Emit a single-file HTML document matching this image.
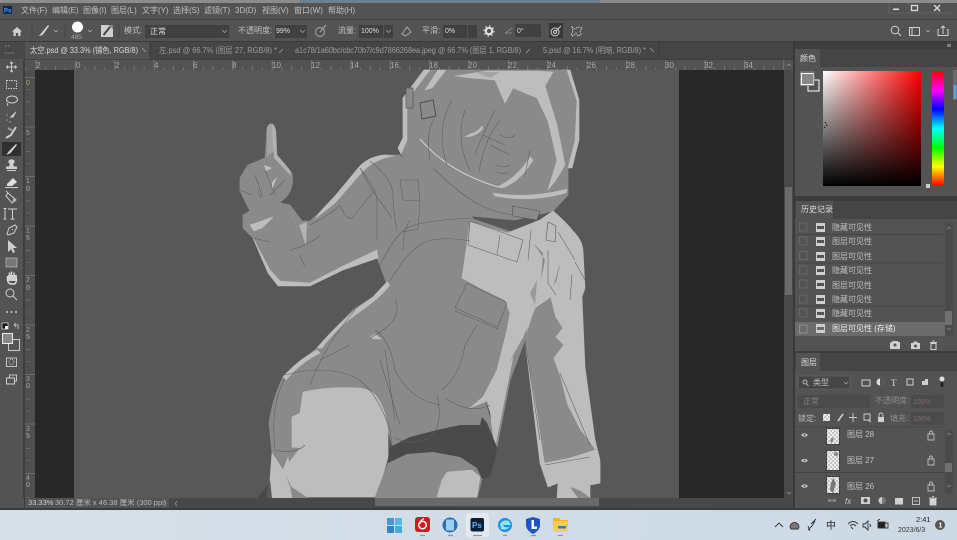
<!DOCTYPE html>
<html><head><meta charset="utf-8"><style>
html,body{margin:0;padding:0;background:#535353;width:957px;height:540px;overflow:hidden}
svg{display:block;position:absolute;left:0;top:0;filter:blur(.35px)}
text{font-family:"Liberation Sans","Noto Sans CJK SC",sans-serif;font-size:8px;fill:#c0c0c0}
.n{font-size:8px;fill:#a8a8a8}
.i{fill:none;stroke:#d0d0d0;stroke-width:1}
.f{fill:#d0d0d0}
.l{fill:none;stroke:#5e5e5e;stroke-width:.55}
.m{fill:#8a8a8a;stroke:#8a8a8a;stroke-width:.8}
.g{fill:#bdbdbd;stroke:#bdbdbd;stroke-width:.6}
</style></head><body>
<svg width="957" height="540" viewBox="0 0 957 540" xmlns="http://www.w3.org/2000/svg">
<defs>
<linearGradient id="wr" x1="0" x2="1" y1="0" y2="0"><stop offset="0" stop-color="#fff"/><stop offset="1" stop-color="#f00"/></linearGradient>
<linearGradient id="tb" x1="0" x2="0" y1="0" y2="1"><stop offset="0" stop-color="#000" stop-opacity="0"/><stop offset="1" stop-color="#000"/></linearGradient>
<linearGradient id="hue" x1="0" x2="0" y1="0" y2="1"><stop offset="0" stop-color="#f00"/><stop offset=".17" stop-color="#f0f"/><stop offset=".33" stop-color="#00f"/><stop offset=".5" stop-color="#0ff"/><stop offset=".67" stop-color="#0f0"/><stop offset=".83" stop-color="#ff0"/><stop offset="1" stop-color="#f00"/></linearGradient>
<linearGradient id="sky" x1="0" x2="1"><stop offset="0" stop-color="#d6e0e9"/><stop offset="1" stop-color="#ccd9e4"/></linearGradient>
<pattern id="chk" width="4" height="4" patternUnits="userSpaceOnUse"><rect width="4" height="4" fill="#eee"/><rect width="2" height="2" fill="#c4c4c4"/><rect x="2" y="2" width="2" height="2" fill="#c4c4c4"/></pattern>
<pattern id="rt" width="39.35" height="10" patternUnits="userSpaceOnUse" x="35.6"><path d="M.5 0V10M10.3 7.500V10M20 6V10M29.8 7.500V10" stroke="#858585" stroke-width=".7"/></pattern>
<pattern id="vt" width="10" height="49.5" patternUnits="userSpaceOnUse" y="77"><path d="M0 .5H10M7.500 12.500H10M6 25H10M7.500 37H10" stroke="#757575" stroke-width=".7"/></pattern>
</defs>

<!-- window chrome -->
<rect width="957" height="540" fill="#535353"/>
<rect width="957" height="3" fill="#8c8d88"/><rect x="300" width="300" height="3" fill="#6f7f8f"/>
<rect y="19" width="957" height="1" fill="#434343"/>
<rect y="41" width="957" height="1" fill="#3a3a3a"/>
<rect y="42" width="795" height="18" fill="#454545"/>
<rect x="25" y="42" width="125" height="18" fill="#535353"/>
<path d="M150 42V60M302 42V60M659 42V60" stroke="#3a3a3a"/>
<rect y="59.500" width="795" height="1" fill="#3a3a3a"/>

<!-- title -->
<rect x="3" y="6" width="9" height="8" fill="#0a2a52"/><text x="4" y="12.500" style="font-size:6px;font-weight:bold;fill:#3ba0f0">Ps</text>
<g>
<text x="21" y="13">文件(F)</text><text x="52" y="13">编辑(E)</text><text x="83" y="13">图像(I)</text><text x="111" y="13">图层(L)</text><text x="142" y="13">文字(Y)</text><text x="173" y="13">选择(S)</text><text x="204" y="13">滤镜(T)</text><text x="235" y="13">3D(D)</text><text x="262" y="13">视图(V)</text><text x="294" y="13">窗口(W)</text><text x="328" y="13">帮助(H)</text>
</g>
<path d="M889 3V13H950" fill="none" stroke="#666" stroke-width=".7"/>
<rect x="893" y="8.500" width="6" height="1.600" fill="#ddd"/>
<rect x="911.500" y="5.500" width="6" height="5" fill="none" stroke="#ddd" stroke-width="1.300"/>
<path d="M934 5L940 11M940 5L934 11" stroke="#ddd" stroke-width="1.300"/>

<!-- options bar -->
<path d="M12 31.500L17 27L22 31.500H20.500V36H18.200V33H15.800V36H13.500V31.500Z" class="f"/>
<path d="M32 24V38" stroke="#444"/>
<path d="M48 25L43 31L41 33.500Q39.500 35.500 38.500 36Q41.500 36 43 34.500L44.500 32.500L49 26Z" class="f"/>
<path d="M54 30L56 32L58 30" fill="none" stroke="#bbb" stroke-width=".7"/>
<path d="M65 24V38" stroke="#444"/>
<circle cx="77.500" cy="27" r="5.500" fill="#fff"/>
<text x="71" y="39" style="font-size:6.500px;fill:#aaa">485</text>
<path d="M88 30L90 32L92 30" fill="none" stroke="#bbb" stroke-width=".7"/>
<rect x="101" y="25" width="12" height="12" fill="#cfcfcf"/><path d="M103.500 35L110 27" stroke="#444" stroke-width="2"/><path d="M108 25H113V29Z" fill="#888"/>
<path d="M119 24V38" stroke="#444"/>
<text x="124" y="33">模式:</text>
<rect x="145" y="25" width="84" height="13" fill="#404040"/><text x="150" y="34" style="fill:#ddd">正常</text>
<path d="M222 30L224.500 32.500L227 30" fill="none" stroke="#aaa" stroke-width=".7"/>
<text x="238" y="33">不透明度:</text>
<rect x="275" y="25" width="32" height="13" fill="#404040"/><text x="276" y="33" style="fill:#ddd;font-size:7px">99%</text>
<path d="M300 30L302.500 32.500L305 30" fill="none" stroke="#aaa" stroke-width=".7"/>
<circle cx="320" cy="32" r="4.500" fill="none" stroke="#aaa"/><path d="M320 32L326 25" fill="none" stroke="#aaa"/>
<text x="338" y="33">流量:</text>
<rect x="359" y="25" width="24" height="13" fill="#404040"/><rect x="384" y="25" width="9" height="13" fill="#404040"/><text x="361" y="33" style="fill:#ddd;font-size:7px">100%</text>
<path d="M386 30L388.500 32.500L391 30" fill="none" stroke="#aaa" stroke-width=".7"/>
<path d="M402 34L407 27L411 32L405 36Z" fill="none" stroke="#aaa"/>
<text x="422" y="33">平滑:</text>
<rect x="443" y="25" width="24" height="13" fill="#404040"/><rect x="468" y="25" width="9" height="13" fill="#404040"/><text x="445" y="33" style="fill:#ddd;font-size:7px">0%</text>
<circle cx="489" cy="31" r="3.200" fill="none" stroke="#e0e0e0" stroke-width="2.200"/><circle cx="489" cy="31" r="5" fill="none" stroke="#e0e0e0" stroke-width="1.300" stroke-dasharray="1.500 2.400"/>
<path d="M505 33L512 28M505 33H512" fill="none" stroke="#999" stroke-width=".7"/>
<rect x="515" y="24" width="26" height="13" fill="#404040"/><text x="517" y="33" style="fill:#ddd;font-size:7px">0°</text>
<rect x="549" y="23" width="14" height="15" fill="#383838"/>
<circle cx="555" cy="32" r="4" class="i"/><circle cx="555" cy="32" r="1.500" class="i"/><path d="M556 31L561 26" class="i"/>
<path d="M572 27L575 29L578 27L582 28L580 31L581 35L578 36L576 33L573 36L571 35L573 31Z" fill="none" stroke="#ccc" stroke-width="1" stroke-dasharray="1.500 1"/>
<circle cx="895" cy="30" r="3.800" class="i"/><path d="M898 33L901 36" class="i"/>
<rect x="909.500" y="27.500" width="10" height="8" class="i"/><path d="M912 28V35" class="i"/>
<path d="M926 30L928 32L930 30" fill="none" stroke="#bbb" stroke-width=".7"/>
<path d="M939 29.500H938V35.500H948V29.500H947M943 34V26M941 28L943 26L945 28" class="i"/>

<!-- tabs -->
<text x="30" y="53" textLength="108" lengthAdjust="spacingAndGlyphs" style="fill:#d8d8d8">太空.psd @ 33.3% (铺色, RGB/8)</text><path d="M142 48L146 52" stroke="#aaa" stroke-width=".7"/>
<text x="159" y="53" textLength="118" lengthAdjust="spacingAndGlyphs" style="fill:#9c9c9c">左.psd @ 66.7% (图层 27, RGB/8) *</text><path d="M279 53L283 49" stroke="#aaa" stroke-width=".7"/>
<text x="295" y="53" textLength="226" lengthAdjust="spacingAndGlyphs" style="fill:#9c9c9c">a1c78/1a60bc/cbc70b7/c9d7866268ea.jpeg @ 66.7% (图层 1, RGB/8)</text><path d="M526 53L530 49" stroke="#aaa" stroke-width=".7"/>
<text x="543" y="53" textLength="103" lengthAdjust="spacingAndGlyphs" style="fill:#9c9c9c">5.psd @ 16.7% (明暗, RGB/8) *</text><path d="M650 48L654 52" stroke="#aaa" stroke-width=".7"/>

<!-- rulers -->
<rect x="24" y="60" width="771" height="10" fill="#535353"/>
<rect x="24" y="70" width="11" height="430" fill="#4f4f4f"/>
<rect x="24" y="60" width="762" height="10" fill="url(#rt)"/>
<rect x="25" y="70" width="10" height="428" fill="url(#vt)"/>
<g>
<text class="n" x="36" y="68">2</text><text class="n" x="76" y="68">0</text><text class="n" x="115" y="68">2</text><text class="n" x="154" y="68">4</text><text class="n" x="193" y="68">6</text><text class="n" x="232" y="68">8</text><text class="n" x="272" y="68">10</text><text class="n" x="311" y="68">12</text><text class="n" x="350" y="68">14</text><text class="n" x="390" y="68">16</text><text class="n" x="429" y="68">18</text><text class="n" x="468" y="68">20</text><text class="n" x="508" y="68">22</text><text class="n" x="547" y="68">24</text><text class="n" x="587" y="68">26</text><text class="n" x="626" y="68">28</text><text class="n" x="665" y="68">30</text><text class="n" x="704" y="68">32</text><text class="n" x="744" y="68">34</text>
</g>
<g>
<text style="font-size:7px;fill:#b09a80" x="26" y="85">0</text><text style="font-size:7px;fill:#a0a0a0" x="26" y="135">5</text>
<text style="font-size:7px;fill:#a0a0a0" x="26" y="183">1</text><text style="font-size:7px;fill:#a0a0a0" x="26" y="191">0</text>
<text style="font-size:7px;fill:#a0a0a0" x="26" y="233">1</text><text style="font-size:7px;fill:#a0a0a0" x="26" y="240">5</text>
<text style="font-size:7px;fill:#a0a0a0" x="26" y="282">2</text><text style="font-size:7px;fill:#a0a0a0" x="26" y="290">0</text>
<text style="font-size:7px;fill:#a0a0a0" x="26" y="332">2</text><text style="font-size:7px;fill:#a0a0a0" x="26" y="339">5</text>
<text style="font-size:7px;fill:#a0a0a0" x="26" y="381">3</text><text style="font-size:7px;fill:#a0a0a0" x="26" y="388">0</text>
<text style="font-size:7px;fill:#a0a0a0" x="26" y="431">3</text><text style="font-size:7px;fill:#a0a0a0" x="26" y="438">5</text>
<text style="font-size:7px;fill:#a0a0a0" x="26" y="480">4</text><text style="font-size:7px;fill:#a0a0a0" x="26" y="487">0</text>
</g>

<!-- pasteboard + canvas -->
<rect x="35" y="70" width="749" height="428" fill="#282828"/>
<rect x="74" y="70" width="605" height="428" fill="#585858"/>

<!-- illustration -->
<g stroke-linejoin="round">
<!-- right sleeve -->
<path class="g" d="M520 240L553 211Q566 222 573 231Q582 240 583 250L585 288L582 297L585 367L595 440L600 460L600 483L590 485V498H557L558 483L548 487L540 463L525 340L513 357Z"/>
<path class="m" d="M535 308L548 300L550 297L555 317L562 328L555 337L563 345L553 358L560 377L567 405L580 430L595 450L570 458L545 463L537 410L525 340Z"/>
<path class="g" d="M545 463L570 458L595 450L600 465V483L590 485L558 483L548 487Z"/>
<path fill="#8a8a8a" d="M570 487Q582 490 590 498H578Z"/>
<path fill="#8a8a8a" d="M552 277L560 265L556 282L550 290Z"/>

<!-- helmet -->
<path class="m" d="M424 70H567L577 101L575 141L568 168L568 195L553 211L515 220L460 215L420 190L405 160L398 148L403 138L403 98Z"/>
<path class="g" d="M424 70L403 98V138L398 148L401 154L407 140L407 100L430 70Z"/>
<path class="g" d="M425 90L438 70H446L432 88Z"/>
<path class="g" d="M562 70H567L577 101L575 141L568 168L572 168L579 140L579 100L570 70Z"/>
<path d="M406 88h7v20h-7z" fill="#8a8a8a" stroke="#555" stroke-width=".7"/>
<path d="M420 103L433 100L436 116L422 119Z" fill="#8a8a8a" stroke="#4c4c4c" stroke-width=".9"/>
<!-- hair light -->
<path class="g" d="M455 76L487 71H537L553 72L545 86L557 125L565 165L556 180L548 190L557 160L548 121L537 98L513 88L505 103L495 80L470 78Z"/>
<path fill="#a4a4a4" d="M475 72H500L490 78Z"/>
<path class="g" d="M497 187Q517 178 530 157L533 160Q520 182 502 188Z"/>
<path class="g" d="M470 134Q478 132 482 126L483 128Q478 136 465 137Z"/>
<!-- helmet rim -->
<path d="M420 139Q448 172 498 187" fill="none" stroke="#cfcfcf" stroke-width="1"/>
<path class="g" d="M493 193Q530 199 567 189L566 193Q530 203 495 196Z"/>
<!-- arm + hand -->
<path class="m" d="M267 128Q269 123 272 124Q276 126 276 135L277 155L292 173Q294 186 288 195L280 203L290 205L302 221H310L330 203L360 166Q370 156 385 155L400 155L430 185L470 212L480 235L400 280L387 285L380 265L377 258L343 268L310 285H280L270 271L253 238L243 228V215L250 211L240 191V178L248 165L265 158Z"/>
<path fill="#a2a2a2" d="M267 128Q269 123 272 124L275 150L267 157Z"/>
<path fill="#bdbdbd" d="M272 124Q276 126 276 135L277 155L290 170L291 176L274 158Z" opacity=".75"/>
<path class="g" d="M360 166Q370 156 385 155L395 156Q376 158 362 172L335 203L316 218L320 212L335 196Z"/>
<path class="g" d="M253 238L270 270L280 281L310 283L343 266L377 250L378 258L343 270L310 286H278L268 273Z"/>
<path class="g" d="M250 225L273 217L262 228L254 231Z"/>
<path fill="#b4b4b4" d="M290 208L300 238L295 222ZM299 225L306 246L307 222Z"/>
<path fill="#c0c0c0" d="M264 165L272 168L266 171ZM272 182L277 177L272 190Z"/>
<!-- torso -->
<path class="m" d="M380 265Q400 235 430 225L470 218L520 235L535 280L525 340L510 380L497 447L482 450L437 440L392 445L388 430L377 397L360 388H330L303 392L300 413L292 417V447L283 470L292 487L307 498H252L270 480L272 453L269 423Q272 400 283 377L317 348L353 310L373 297L387 282Z"/>
<!-- left rim -->
<path class="g" d="M317 348Q345 315 373 297L387 282L390 285Q378 300 355 315Q335 330 322 348Z"/>
<path class="g" d="M283 377Q298 360 317 350L320 353Q300 363 286 380Z"/>
<path fill="#bdbdbd" d="M402 348L413 340L380 340Z" opacity="0"/>
<path class="g" d="M370 337L375 334L381 339L374 339Z"/>
<!-- right torso light -->
<path class="g" d="M470 222L507 233L540 220L553 211L568 228L560 262L550 297L535 308L523 337L510 360L490 400L470 408L483 397L497 370L507 330L510 313L505 300L480 288L462 278Z"/>
<path fill="#8a8a8a" d="M533 243L543 253L541 280L545 260Z"/>
<path fill="#9a9a9a" d="M530 293L535 305L537 280Z"/>
<!-- inner light strip -->
<path class="g" d="M487 398L513 357L495 447L491 420Z"/>
<path fill="#555" d="M485 400L491 420L490 412Z"/>
<!-- thigh -->
<path class="g" d="M303 392Q330 386 360 388Q372 390 377 397Q386 410 388 430V457L377 497H307L292 487L283 470L292 447V417L300 413Z"/>
<path class="g" d="M272 453L283 470L290 487L292 498H272L270 480Z"/>
<path fill="#8a8a8a" d="M287 447L300 448L289 462Z"/>
<path fill="#585858" d="M250 498L270 480L272 498Z"/><path fill="#474747" d="M257 498L268 485L266 498Z"/>
<!-- panty + leg -->
<path class="m" d="M388 463L407 454L433 452L460 457L477 468L482 479L477 498H375Z"/>
<path fill="#4a4a4a" d="M390 447L410 437L437 430L460 425H480L482 417L487 423L497 447L495 460L490 477L482 479L477 468L460 457L433 452L407 454L388 463Z"/>
<path class="g" d="M447 472L472 470L480 477L477 497H437L442 480Z"/>
<!-- strap + collar pieces -->
<path d="M548 222L556 226L555 242L546 240Z" fill="#bdbdbd" stroke="#555" stroke-width=".6"/>
<path d="M512 206L540 211L537 220L513 216Z" fill="#8a8a8a" stroke="#555" stroke-width=".6"/>
<!-- fine lines -->
<path class="l" d="M433 168Q455 190 473 201T513 215M400 180H418L420 201L403 200ZM403 232L418 229L420 201M370 161Q393 180 393 195T397 231M360 168Q377 190 377 201T377 241M380 265Q395 235 407 228T470 218M390 281Q405 255 420 245T470 241M410 220Q403 230 403 250"/>
<path class="l" d="M360 168L372 190L392 218M310 225Q330 215 340 205Q346 220 352 218L375 190M300 255Q305 270 306 265M290 250Q310 245 320 235M240 190L252 195M255 175L262 195Q260 200 258 190M265 170L275 195M285 180L270 195M253 238L270 242"/>
<path class="l" d="M452 100Q435 130 447 165M465 110Q455 140 470 170M495 110Q480 140 475 155M500 120L490 135Q478 165 480 172M530 150L525 175M483 135L505 145M490 145L510 155M436 116Q425 130 430 160M500 135Q510 140 515 135M495 165Q505 168 510 165M497 172Q505 175 508 172"/>
<path class="l" d="M355 310Q325 345 310 385M395 300Q405 320 370 338M350 345L320 360M285 378Q270 405 275 450Q295 455 305 445M285 375Q320 365 350 375Q375 385 390 430L392 445M375 330Q390 340 395 370Q410 400 440 405M437 395Q445 430 425 440Q410 445 395 438M442 390Q460 375 465 345L477 325M445 398Q470 415 490 405"/>
<path class="l" d="M467 283L507 303L498 327L455 308L467 283M455 311L498 329M470 221L468 245L517 262L523 240L470 221M500 235L497 255M525 340L540 440M380 360L400 425M385 350L395 420M560 373L590 445M545 465L590 457"/>
<path class="l" d="M531 230L528 260M558 232L575 260M575 262L585 280M548 250L548 283L556 295M572 275L570 300"/>
</g>

<!-- scrollbars & status -->
<rect x="784" y="70" width="11" height="428" fill="#494949"/><rect x="785" y="187" width="7" height="108" fill="#6a6a6a"/>
<path d="M787 66L789 64L791 66" fill="none" stroke="#999" stroke-width=".7"/>
<path d="M787 492L789 494L791 492" fill="none" stroke="#999" stroke-width=".7"/>
<rect y="498" width="795" height="12" fill="#484848"/><rect x="375" y="498" width="224" height="8" fill="#696969"/>
<rect x="24" y="498" width="145" height="10" fill="#535353"/>
<rect y="508" width="957" height="2" fill="#3a3a3a"/>
<text x="28" y="505" style="font-size:7.500px;fill:#d0d0d0">33.33%</text>
<text x="55" y="505" style="font-size:7.500px;fill:#b8b8b8">30.72 厘米 x 46.38 厘米 (300 ppi)</text>
<path d="M164 501L166 503.500L164 506M177 501L175 503.500L177 506" fill="none" stroke="#999" stroke-width=".7"/>

<!-- toolbar -->
<rect y="42" width="24" height="456" fill="#535353"/><rect x="23" y="60" width="2" height="450" fill="#3e3e3e"/>
<rect x="0" y="42" width="24" height="17" fill="#484848"/>
<rect y="498" width="24" height="10" fill="#535353"/>
<path d="M5 46H7M8 46H10M5 53H14" stroke="#888" stroke-width=".9" stroke-dasharray="1.500 1"/>
<path d="M11.500 62V72M6.500 67H16.500M10 63.500L11.500 62L13 63.500M10 70.500L11.500 72L13 70.500M8 65.500L6.500 67L8 68.500M15 65.500L16.500 67L15 68.500" class="i" style="stroke-width:.9"/>
<rect x="6.500" y="80.500" width="10" height="8" fill="none" stroke="#ccc" stroke-dasharray="1.500 1"/>
<ellipse cx="12" cy="99.500" rx="5.500" ry="3.500" class="i"/><path d="M7 103L8 106" class="i"/>
<path d="M16 112L10 118" class="i"/><path d="M16 112L13 118L11 116Z" class="f"/><path d="M7 114V116M6 120H8M10 121V123" fill="none" stroke="#aaa" stroke-width=".8"/>
<path d="M16 127L11 135L6 138" fill="none" stroke="#ccc" stroke-width="2"/><path d="M8 128L13 131" fill="none" stroke="#999" stroke-width="2"/>
<rect x="2" y="142" width="19" height="14" fill="#303030"/>
<path d="M16 144L9 151Q7 154 6 154.500Q9 154.500 11 152.500L17 145Z" class="f"/>
<path d="M11.500 159.500A2.300 2.300 0 0 1 13 164L14 166.500H17V169H6V166.500H9L10 164A2.300 2.300 0 0 1 11.500 159.500ZM7 170H16V171H7Z" class="f"/>
<path d="M7 184L13 178L17 182L12 186H7Z" fill="#ddd"/><path d="M5 187.500H18" class="i"/>
<path d="M8 193L16 200L12 203L6 196ZM8 193L6 191" class="i"/><path d="M12 203L16 200L14 197Z" fill="#bbb"/>
<path d="M8 209H17M12.500 209V219M10.500 219H14.500M5 208.500V219M3.500 208.500H6.500M3.500 219H6.500" class="i"/>
<path d="M7 234L9 228L15 225L17 227L14 233L8 235ZM12 230L13 229" class="i"/>
<path d="M8 240L8 252L11 249L13 253L15 252L13 248L17 248Z" class="f"/>
<rect x="6" y="258" width="11" height="9" fill="#777" stroke="#bbb" stroke-width=".7"/>
<path d="M7.500 276V280Q8 284 12 284H14Q16 284 16.500 280L16 275V280M9.500 278V272.500M11.500 278V271.500M14 278V272.500" fill="none" stroke="#ddd" stroke-width="1.400"/>
<rect x="8" y="275" width="8" height="6" class="f"/>
<circle cx="10" cy="293" r="4" class="i"/><path d="M13 296L17 300" class="i"/>
<path d="M6 312H8M10.500 312H12.500M15 312H17" stroke="#ccc" stroke-width="1.400"/>
<rect x="2" y="323" width="6" height="6" fill="#111"/><rect x="5" y="326" width="3" height="3" fill="#fff"/><rect x="2" y="323" width="6" height="6" fill="none" stroke="#ddd" stroke-width=".7"/>
<path d="M14 325H18V329M14 325L16 323M14 325L16 327" class="i" style="stroke-width:.8"/>
<rect x="8.500" y="339.500" width="11" height="11" fill="#555" stroke="#ccc"/>
<rect x="2.500" y="333.500" width="10" height="10" fill="#888" stroke="#eee"/>
<rect x="6.500" y="358" width="10" height="8.500" class="i" style="stroke-width:.9"/><circle cx="11.500" cy="362" r="2.500" fill="none" stroke="#ddd" stroke-width=".8" stroke-dasharray="1 1"/>
<rect x="9.500" y="375" width="7" height="6" class="i" style="stroke-width:.9"/><rect x="6.500" y="378" width="8" height="6" fill="#535353" stroke="#ddd" stroke-width=".9"/>

<!-- right panels -->
<rect x="793" y="42" width="164" height="468" fill="#535353"/>
<rect x="793" y="42" width="2" height="468" fill="#3a3a3a"/>
<rect x="795" y="42" width="162" height="7" fill="#3f3f3f"/>
<path d="M948 44V47M950 44V47" stroke="#bbb"/>
<rect x="795" y="49" width="162" height="18" fill="#454545"/><rect x="795" y="49" width="25" height="18" fill="#535353"/>
<text x="800" y="61" style="fill:#ddd">颜色</text>
<rect x="795" y="196" width="162" height="5" fill="#3c3c3c"/>
<path d="M813 80H819V91H808V85" fill="#535353" stroke="#fff"/>
<rect x="801.500" y="73.500" width="12" height="11" fill="#888" stroke="#fff" stroke-width="1"/>
<rect x="800.500" y="72" width="13.500" height="13.500" fill="none" stroke="#888"/>
<rect x="823" y="71" width="98" height="115" fill="url(#wr)"/><rect x="823" y="71" width="98" height="115" fill="url(#tb)"/>
<rect x="932" y="71" width="12" height="115" fill="url(#hue)"/>
<path d="M825 122L827 125L823 129" fill="none" stroke="#111" stroke-dasharray="1.500 1.500"/>
<path d="M926 184H930V188H926Z" fill="#ccc"/>
<rect x="953" y="70" width="4" height="30" fill="#6a6a6a"/><rect x="953.500" y="85" width="3" height="14" fill="#5b9fe6"/>

<!-- history -->
<rect x="795" y="201" width="162" height="18" fill="#454545"/><rect x="796" y="201" width="37" height="18" fill="#535353"/>
<text x="801" y="212" style="fill:#ddd">历史记录</text>
<rect x="795" y="322" width="150" height="14" fill="#6b6b6b"/>
<path d="M795 234.500H943M795 263H943M795 306H943" stroke="#444"/>
<g fill="none" stroke="#6c6c6c" stroke-width=".8">
<rect x="799.500" y="223" width="7.500" height="8"/><rect x="799.500" y="237" width="7.500" height="8"/><rect x="799.500" y="251.500" width="7.500" height="8"/><rect x="799.500" y="266" width="7.500" height="8"/><rect x="799.500" y="280" width="7.500" height="8"/><rect x="799.500" y="295" width="7.500" height="8"/><rect x="799.500" y="309" width="7.500" height="8"/><rect x="799.500" y="325" width="7.500" height="8" stroke="#999"/>
</g>
<g fill="#cfcfcf">
<path d="M816 223H825V232H816ZM817 226V229H824V226Z" fill-rule="evenodd"/><path d="M816 237H825V246H816ZM817 240V243H824V240Z" fill-rule="evenodd"/><path d="M816 252H825V261H816ZM817 255V258H824V255Z" fill-rule="evenodd"/><path d="M816 266H825V275H816ZM817 269V272H824V269Z" fill-rule="evenodd"/><path d="M816 280H825V289H816ZM817 283V286H824V283Z" fill-rule="evenodd"/><path d="M816 295H825V304H816ZM817 298V301H824V298Z" fill-rule="evenodd"/><path d="M816 309H825V318H816ZM817 312V315H824V312Z" fill-rule="evenodd"/><path d="M816 324H825V333H816ZM817 327V330H824V327Z" fill-rule="evenodd"/>
</g>
<g>
<text x="832" y="230">隐藏可见性</text><text x="832" y="244">图层可见性</text><text x="832" y="259">图层可见性</text><text x="832" y="273">隐藏可见性</text><text x="832" y="288">图层可见性</text><text x="832" y="302">隐藏可见性</text><text x="832" y="316">隐藏可见性</text><text x="832" y="331" style="fill:#eee">图层可见性 (存储)</text>
</g>
<rect x="945" y="222" width="8" height="114" fill="#4b4b4b"/><rect x="945" y="311" width="7" height="14" fill="#707070"/>
<path d="M947 229L949 227L951 229M947 328L949 330L951 328" fill="none" stroke="#888" stroke-width=".7"/>
<path d="M890 343L893 341H898V342H900V349H890Z" class="f"/><circle cx="895" cy="345" r="1.500" fill="#535353"/>
<path d="M911 343H913L914 341.500H917L918 343H920V349H911Z" class="f"/><circle cx="915.500" cy="346" r="1.500" fill="#535353"/>
<path d="M930 342.500H937M931 343.500H936V349.500H931ZM932.500 341H934.500" class="i"/>
<rect x="795" y="351" width="162" height="2" fill="#3c3c3c"/>

<!-- layers -->
<rect x="795" y="353" width="162" height="18" fill="#454545"/><rect x="796" y="353" width="24" height="18" fill="#535353"/>
<text x="801" y="365" style="fill:#ddd">图层</text>
<rect x="798" y="376" width="52" height="13" fill="#464646" stroke="#666" stroke-width=".7"/>
<circle cx="805" cy="382" r="2" class="i" style="stroke-width:.8"/><path d="M806.500 384L808.500 386" class="i" style="stroke-width:.8"/>
<text x="813" y="385">类型</text><path d="M844 382L846 384L848 382" fill="none" stroke="#aaa" stroke-width=".7"/>
<rect x="862" y="380" width="8" height="6" class="i"/>
<circle cx="880" cy="382" r="3.500" fill="#ddd"/><path d="M880 378.500A3.500 3.500 0 0 1 880 385.500Z" fill="#535353"/>
<text x="891" y="386" style="font-family:'Liberation Serif',serif;font-size:9px;fill:#ddd">T</text>
<rect x="907" y="379" width="6" height="6" class="i"/>
<path d="M922 385V381H925V379H928V385Z" class="f"/>
<circle cx="942" cy="379" r="2.500" fill="#ddd"/><rect x="940.500" y="382" width="3" height="5" rx="1.500" fill="#222"/>
<rect x="798" y="395" width="72" height="13" fill="#4b4b4b"/><text x="803" y="404" style="fill:#808080">正常</text>
<text x="875" y="403" style="fill:#8d8d8d">不透明度:</text>
<rect x="911" y="395" width="33" height="13" fill="#4b4b4b"/><text x="913" y="404" style="font-size:7px;fill:#7e6e6e">100%</text>
<text x="798" y="421">锁定:</text>
<rect x="823" y="414" width="7" height="7" fill="url(#chk)"/>
<path d="M843 414L838 421" stroke="#ddd" stroke-width="1.500"/>
<path d="M853 413V422M849 417.500H857" class="i" style="stroke-width:.9"/>
<path d="M864 414H870V420H864ZM868 420L871 422" class="i" style="stroke-width:.9"/>
<rect x="878" y="417" width="6" height="5" class="f"/><path d="M879 417V415A2 2 0 0 1 883 415V417" class="i" style="stroke-width:.9"/>
<text x="890" y="421" style="fill:#8d8d8d">填充:</text>
<rect x="911" y="412" width="33" height="13" fill="#4b4b4b"/><text x="913" y="421" style="font-size:7px;fill:#7e6e6e">100%</text>
<path d="M795 427H945" stroke="#4a4a4a"/>
<path d="M795 472.500H945" stroke="#444"/>
<g>
<path d="M801 435Q804.500 431.500 808 435Q804.500 438.500 801 435Z" class="f"/><circle cx="804.500" cy="435" r="1" fill="#535353"/>
<path d="M801 460.500Q804.500 457 808 460.500Q804.500 464 801 460.500Z" class="f"/><circle cx="804.500" cy="460.500" r="1" fill="#535353"/>
<path d="M801 486Q804.500 482.500 808 486Q804.500 489.500 801 486Z" class="f"/><circle cx="804.500" cy="486" r="1" fill="#535353"/>
</g>
<rect x="826.500" y="428.500" width="13" height="16" fill="url(#chk)" stroke="#222" stroke-width=".7"/>
<path d="M830 441Q831 437 834 438L832 443Z" fill="#888"/>
<rect x="826.500" y="450.500" width="13" height="20" fill="url(#chk)" stroke="#222" stroke-width=".7"/><circle cx="836" cy="454" r="2" fill="#888"/>
<rect x="826.500" y="476.500" width="13" height="17" fill="url(#chk)" stroke="#222" stroke-width=".7"/><path d="M833 478L836 483L833 493L830 490L831 483Z" fill="#777"/>
<text x="847" y="437">图层 28</text><text x="847" y="463">图层 27</text><text x="847" y="489">图层 26</text>
<g>
<path d="M928 434H934V440H928ZM929.500 434V432.500A1.500 1.500 0 0 1 932.500 432.500V434" fill="none" stroke="#bbb" stroke-width=".9"/>
<path d="M928 459H934V465H928ZM929.500 459V457.500A1.500 1.500 0 0 1 932.500 457.500V459" fill="none" stroke="#bbb" stroke-width=".9"/>
<path d="M928 485H934V491H928ZM929.500 485V483.500A1.500 1.500 0 0 1 932.500 483.500V485" fill="none" stroke="#bbb" stroke-width=".9"/>
</g>
<rect x="945" y="429" width="8" height="65" fill="#4b4b4b"/><rect x="945" y="463" width="7" height="9" fill="#707070"/>
<path d="M947 435L949 433L951 435M947 485L949 487L951 485" fill="none" stroke="#888" stroke-width=".7"/>
<rect x="795" y="494" width="162" height="14" fill="#535353"/>
<path d="M828 500.500H837" stroke="#8a8a8a" stroke-width="2.500" stroke-dasharray="3.500 1"/>
<text x="845" y="504" style="font-size:8px;font-style:italic;fill:#ccc">fx</text>
<path d="M861 497H870V504H861Z" class="f"/><circle cx="865.500" cy="500.500" r="2" fill="#535353"/>
<circle cx="882" cy="500.500" r="3.500" fill="#ccc"/><path d="M882 497A3.500 3.500 0 0 1 882 504Z" fill="#777"/>
<path d="M895 498H903V504.500H895Z" class="f"/>
<rect x="912.500" y="497.500" width="7" height="7" class="i" style="stroke-width:.9"/><path d="M914 501H918" class="i" style="stroke-width:.9"/>
<path d="M929 498H937M930 499H936V505H930ZM932 496.500H934" class="f" stroke="#ddd" stroke-width=".8"/>
<rect y="508" width="957" height="2" fill="#3a3a3a"/>

<!-- taskbar -->
<rect y="510" width="957" height="30" fill="url(#sky)"/>
<g>
<rect x="387" y="518" width="7" height="7" fill="#3e9bd8"/><rect x="395" y="518" width="7" height="7" fill="#57b6e8"/><rect x="387" y="526" width="7" height="7" fill="#2f86cb"/><rect x="395" y="526" width="7" height="7" fill="#4aa8e0"/>
<rect x="415" y="517" width="15" height="15" rx="3" fill="#d7141f"/><circle cx="422.500" cy="525" r="3.800" fill="none" stroke="#fff" stroke-width="1.500"/><path d="M424 518.500Q420 520 420 524" fill="none" stroke="#fff" stroke-width="1.200"/>
<circle cx="450" cy="525" r="7.500" fill="#2b6cb8"/><rect x="446" y="519.500" width="8" height="11" rx="1" fill="#9bd0f0"/>
<rect x="466" y="513" width="23" height="24" rx="3" fill="#e3e9ef"/>
<rect x="470.500" y="518" width="13.500" height="13.500" rx="2" fill="#0b1e33"/><text x="472" y="528" style="font-size:8px;font-weight:bold;fill:#4fb3f5">Ps</text>
<circle cx="505" cy="525" r="7" fill="#1d8fe0"/><path d="M500 524Q503 519 509 521L511 525H503Q504 528 510 527Q506 531 501 529Z" fill="#8fe3ef"/>
<path d="M526 519L533 517L540 519V526Q539 531 533 534Q527 531 526 526Z" fill="#1d56c4"/><path d="M531.500 520V529H537V526.500H534V520Z" fill="#fff"/>
<path d="M553 518H559L561 520H568V532H553Z" fill="#f0b52a"/><rect x="553" y="521" width="15" height="11" fill="#f7cf58"/><rect x="558" y="526" width="8" height="2.500" fill="#2a7fc4"/>
</g>
<path d="M420 535.500H425M448 535.500H453M473 535.500H482M503 535.500H507M531 535.500H536M558 535.500H563" stroke="#8c949c" stroke-width="1.200"/>
<g fill="none" stroke="#333" stroke-width=".9">
<path d="M775 527L779 523L783 527"/>
<path d="M790 527A4.500 4.500 0 0 1 799 527L798 529H791Z" fill="#777"/>
<path d="M808 530L812 526M815 521L812 526M816 519L811 524M808 526L810 531"/>
<path d="M853 529L851 527M848 524Q853 519 858 524M850 526Q853 523 856 526"/>
<path d="M863 524H865L868 521V530L865 527H863ZM870 524Q871 525.500 870 527"/>
<rect x="878" y="522" width="7" height="6" fill="#222"/><path d="M877 521L880 519M885 523H888V528H885"/>
</g>
<text x="826" y="529" style="font-size:10px;fill:#222">中</text>
<text x="916" y="522" style="font-size:7.500px;fill:#222">2:41</text>
<text x="898" y="532" style="font-size:7px;fill:#333">2023/6/3</text>
<circle cx="940" cy="525" r="5" fill="#555"/><text x="938.500" y="527.500" style="font-size:7px;font-weight:bold;fill:#fff">1</text>
</svg>
</body></html>
